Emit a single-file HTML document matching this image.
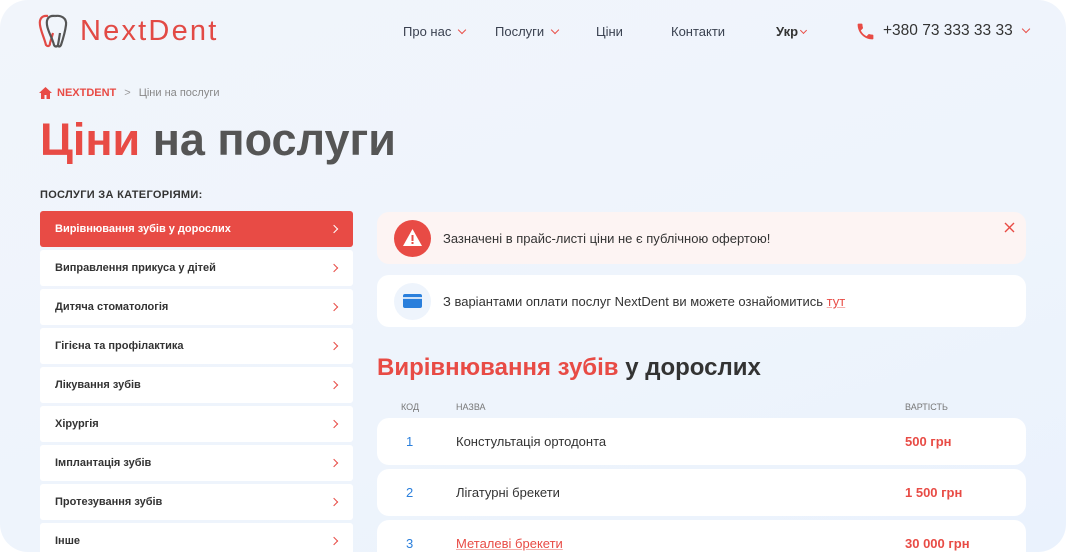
<!DOCTYPE html>
<html><head><meta charset="utf-8"><style>
*{box-sizing:border-box;margin:0;padding:0}
html,body{width:1066px;height:552px;overflow:hidden;background:#fff}
body{font-family:"Liberation Sans","DejaVu Sans",sans-serif;color:#333}
.page{position:absolute;left:0;top:0;width:1066px;height:552px;border-radius:28px;background:linear-gradient(160deg,#f1f5fb 0%,#eef4fc 60%,#eaf2fd 100%);overflow:hidden}
.abs{position:absolute}
.logo{left:80px;top:15px;font-size:29px;color:#e24a45;letter-spacing:2.2px}
.nav{top:24px;font-size:13px;color:#3a4150}
.chev{display:inline-block;width:6px;height:6px;border-right:1.3px solid #e9504a;border-bottom:1.3px solid #e9504a;transform:rotate(45deg);margin-left:8px;position:relative;top:-3px}
.bc{left:57px;top:87px;font-size:11px}
h1{position:absolute;left:40px;top:114px;font-size:45px;font-weight:bold;color:#555}
h1 span{color:#e84b45}
.cat{left:40px;top:189px;font-size:11px;font-weight:bold;color:#333;letter-spacing:.3px}
.side{position:absolute;left:40px;width:313px;height:36px;background:#fff;border-radius:3px;font-size:11px;font-weight:bold;color:#333;padding:12px 15px}
.side b{position:absolute;right:16px;top:15px;width:6px;height:6px;border-right:1.3px solid #e84b45;border-top:1.3px solid #e84b45;transform:rotate(45deg)}
.side.on{background:#e84b45;color:#fff}
.side.on b{border-color:#fff}
.card{position:absolute;left:377px;width:649px;border-radius:12px}
.row{position:absolute;left:377px;width:649px;height:47px;background:#fff;border-radius:12px;font-size:13px}
.row .n{position:absolute;left:29px;top:16px;color:#2a7fdc}
.row .t{position:absolute;left:79px;top:16px;color:#333}
.row .p{position:absolute;left:528px;top:16px;color:#e84b45;font-weight:bold}
</style></head><body><div class="page">
<svg class="abs" style="left:38px;top:13px" width="32" height="36" viewBox="0 0 32 36"><path d="M10 3C4 2 1 6 2 12c1 7 4 12 6 20 2 2 4 1 4-2l3-10" fill="none" stroke="#e24a45" stroke-width="2.2"/><path d="M17 3c-6-1-9 3-8 9 1 7 5 12 7 20 1 2 3 2 4 0l2-12" fill="none" stroke="#555" stroke-width="2.2"/><path d="M17 3c6-1 12 2 11 9-1 8-3 14-5 20-1 2-3 2-3 0" fill="none" stroke="#555" stroke-width="2.2"/></svg>
<div class="abs logo">NextDent</div>
<div class="abs nav" style="left:403px">Про нас<span class="chev"></span></div>
<div class="abs nav" style="left:495px">Послуги<span class="chev"></span></div>
<div class="abs nav" style="left:596px">Ціни</div>
<div class="abs nav" style="left:671px">Контакти</div>
<div class="abs nav" style="left:776px;font-weight:bold;color:#333">Укр<span class="chev" style="margin-left:3px;width:5px;height:5px"></span></div>
<svg class="abs" style="left:855px;top:21px" width="21" height="21" viewBox="0 0 24 24"><path fill="#e84b45" d="M6.6 10.8c1.4 2.8 3.8 5.1 6.6 6.6l2.2-2.2c.3-.3.7-.4 1-.2 1.1.4 2.3.6 3.6.6.6 0 1 .4 1 1V20c0 .6-.4 1-1 1C10.6 21 3 13.4 3 4c0-.6.4-1 1-1h3.5c.6 0 1 .4 1 1 0 1.3.2 2.5.6 3.6.1.3 0 .7-.2 1z"/></svg>
<div class="abs nav" style="left:883px;top:22px;font-size:15.5px;color:#333">+380 73 333 33 33<span class="chev" style="margin-left:10px"></span></div>
<svg class="abs" style="left:39px;top:87px" width="13" height="12" viewBox="0 0 13 12"><path d="M6.5 0L0 6h2v6h3.5V8h2v4H11V6h2z" fill="#e84b45"/></svg>
<div class="abs bc"><span style="color:#e84b45;font-weight:bold">NEXTDENT</span><span style="color:#999;margin:0 8px">&gt;</span><span style="color:#888">Ціни на послуги</span></div>
<h1><span>Ціни</span> на послуги</h1>
<div class="abs cat">ПОСЛУГИ ЗА КАТЕГОРІЯМИ:</div>
<div class="side on" style="top:211px">Вирівнювання зубів у дорослих<b></b></div>
<div class="side" style="top:250px">Виправлення прикуса у дітей<b></b></div>
<div class="side" style="top:289px">Дитяча стоматологія<b></b></div>
<div class="side" style="top:328px">Гігієна та профілактика<b></b></div>
<div class="side" style="top:367px">Лікування зубів<b></b></div>
<div class="side" style="top:406px">Хірургія<b></b></div>
<div class="side" style="top:445px">Імплантація зубів<b></b></div>
<div class="side" style="top:484px">Протезування зубів<b></b></div>
<div class="side" style="top:523px">Інше<b></b></div>
<div class="card" style="top:212px;height:52px;background:#fdf4f3"></div>
<div class="abs" style="left:394px;top:220px;width:37px;height:37px;border-radius:50%;background:#e84b45"></div>
<svg class="abs" style="left:401px;top:227px" width="23" height="21" viewBox="0 0 23 21"><path d="M11.5 2L21 19H2z" fill="#fff"/><rect x="10.5" y="8" width="2" height="6" fill="#e84b45"/><rect x="10.5" y="15" width="2" height="2" fill="#e84b45"/></svg>
<div class="abs" style="left:443px;top:231px;font-size:13px;color:#333">Зазначені в прайс-листі ціни не є публічною офертою!</div>
<svg class="abs" style="left:1004px;top:222px" width="11" height="11" viewBox="0 0 11 11"><path d="M1 1L10 10M10 1L1 10" stroke="#e84b45" stroke-width="1.4"/></svg>
<div class="card" style="top:275px;height:52px;background:#fff"></div>
<div class="abs" style="left:394px;top:283px;width:37px;height:37px;border-radius:50%;background:#eef4fc"></div>
<div class="abs" style="left:403px;top:294px;width:19px;height:14px;border-radius:2px;background:#2a7fdc"></div>
<div class="abs" style="left:403px;top:297px;width:19px;height:2px;background:#cfe2f8"></div>
<div class="abs" style="left:443px;top:294px;font-size:13px;color:#333">З варіантами оплати послуг NextDent ви можете ознайомитись <span style="color:#e84b45;text-decoration:underline;text-decoration-color:#f5b0ad">тут</span></div>
<div class="abs" style="left:377px;top:354px;font-size:24px;font-weight:bold;color:#333"><span style="color:#e84b45">Вирівнювання зубів</span> у дорослих</div>
<div class="abs" style="left:401px;top:402px;font-size:9px;color:#777">КОД</div>
<div class="abs" style="left:456px;top:402px;font-size:9px;color:#777">НАЗВА</div>
<div class="abs" style="left:905px;top:402px;font-size:9px;color:#777">ВАРТІСТЬ</div>
<div class="row" style="top:418px"><span class="n">1</span><span class="t">Констультація ортодонта</span><span class="p">500 грн</span></div>
<div class="row" style="top:469px"><span class="n">2</span><span class="t">Лігатурні брекети</span><span class="p">1 500 грн</span></div>
<div class="row" style="top:520px"><span class="n">3</span><span class="t" style="color:#e84b45;text-decoration:underline;text-decoration-color:#f5b0ad">Металеві брекети</span><span class="p">30 000 грн</span></div>
</div></body></html>
